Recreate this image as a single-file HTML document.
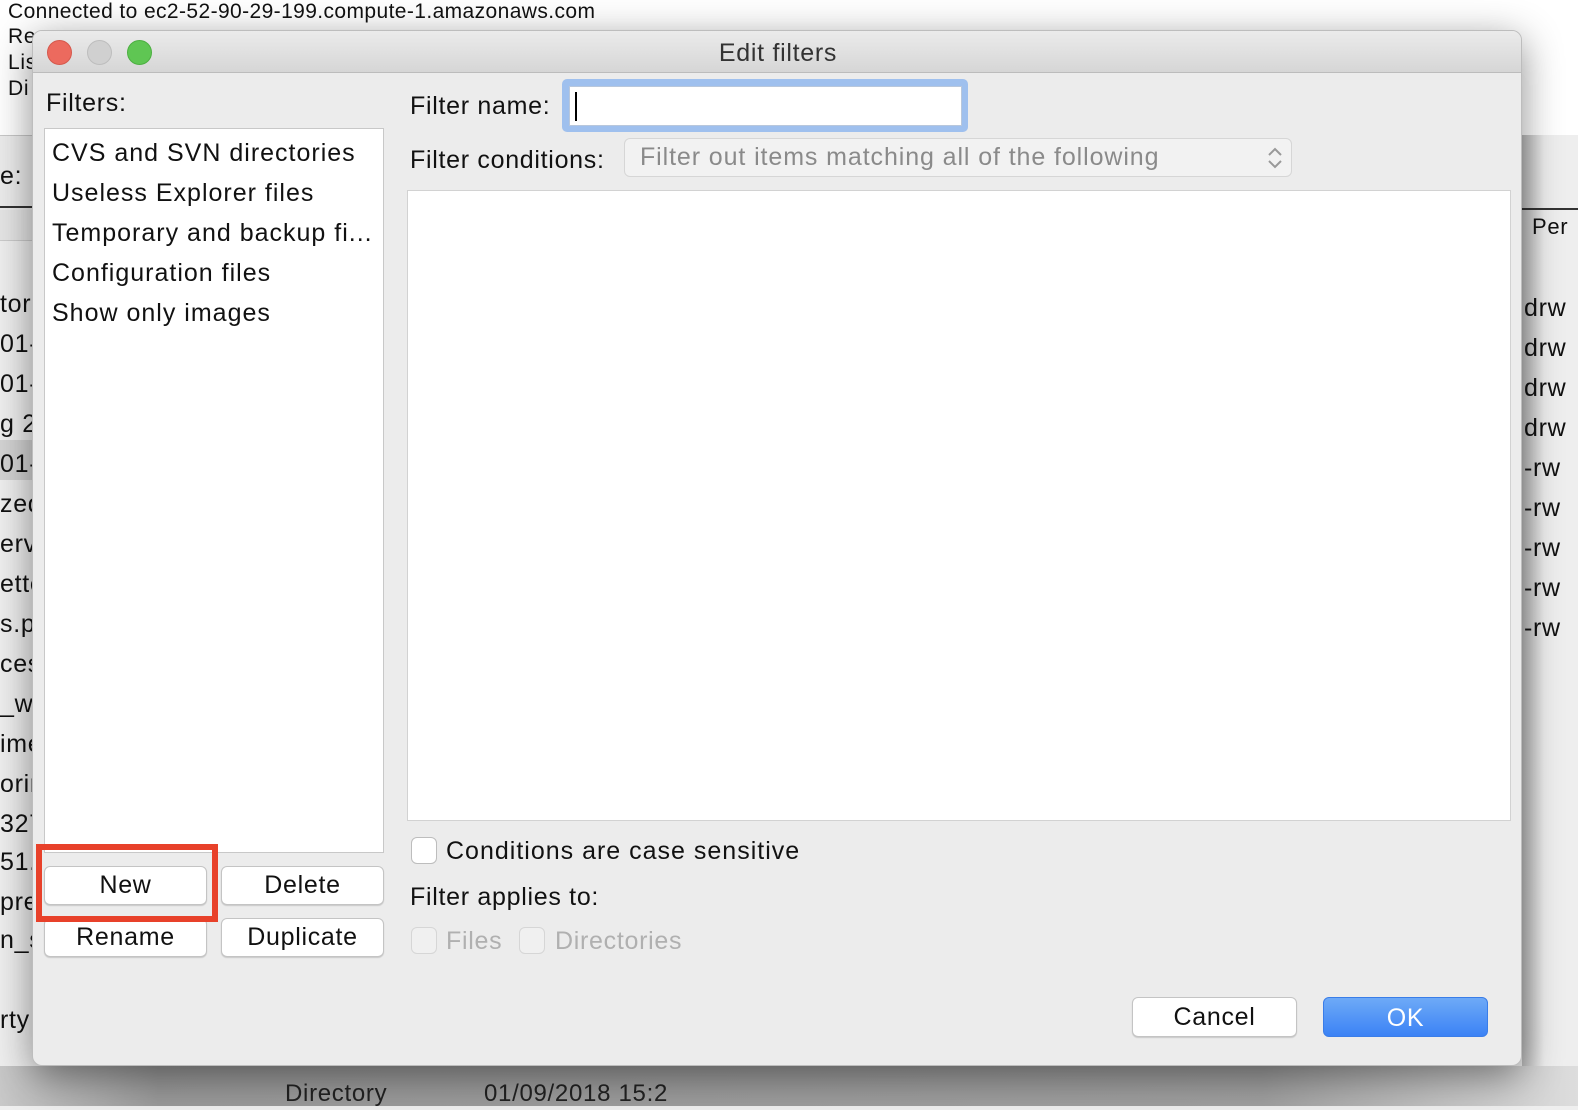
<!DOCTYPE html>
<html><head><meta charset="utf-8"><style>
*{margin:0;padding:0;box-sizing:border-box}
body{width:1578px;height:1102px;position:relative;overflow:hidden;background:#e6e6e6;font-family:"Liberation Sans",Arial,sans-serif;color:#111;letter-spacing:0.7px}
.a{position:absolute;white-space:nowrap}
.t{font-size:25px}
.btn{position:absolute;background:#fff;border:1px solid #c4c4c4;border-radius:6px;box-shadow:0 1px 1px rgba(0,0,0,.15);font-size:25px;text-align:center;color:#111}
.cb{position:absolute;width:26px;height:27px;border:1px solid #bdbdbd;border-radius:6px;background:#fff}
.bg{position:absolute;font-size:25px;color:#111;left:0}
</style></head><body>
<div class="a" style="left:0;top:0;width:1578px;height:135px;background:#fff"></div>
<div class="a" style="left:8px;top:0;font-size:21px;letter-spacing:0.4px">Connected to ec2-52-90-29-199.compute-1.amazonaws.com</div>
<div class="a" style="left:8px;top:25px;font-size:21px">Re</div>
<div class="a" style="left:8px;top:51px;font-size:21px">Lis</div>
<div class="a" style="left:8px;top:77px;font-size:21px">Di</div>
<div class="a" style="left:0;top:135px;width:1578px;height:75px;background:#ececec;border-top:1px solid #c8c8c8"></div>
<div class="a" style="left:0;top:162px;font-size:25px">e:</div>
<div class="a" style="left:0;top:206px;width:1578px;height:2px;background:#333"></div>
<div class="a" style="left:0;top:240px;width:1578px;height:870px;background:#efefef;border-top:1px solid #ccc"></div>
<div class="a" style="left:0;top:440px;width:40px;height:40px;background:#d4d4d4"></div>
<div class="bg a" style="top:290px">tor</div><div class="bg a" style="top:330px">01-</div><div class="bg a" style="top:370px">01-</div><div class="bg a" style="top:410px">g 20</div><div class="bg a" style="top:450px">01-</div><div class="bg a" style="top:490px">zed</div><div class="bg a" style="top:530px">erv</div><div class="bg a" style="top:570px">ette</div><div class="bg a" style="top:610px">s.p</div><div class="bg a" style="top:650px">ces</div><div class="bg a" style="top:690px">_wi</div><div class="bg a" style="top:730px">ime</div><div class="bg a" style="top:770px">orin</div><div class="bg a" style="top:810px">327</div><div class="bg a" style="top:848px">51.f</div><div class="bg a" style="top:888px">pre</div><div class="bg a" style="top:926px">n_s</div><div class="bg a" style="top:1006px">rty</div>
<div class="a" style="left:1522px;top:135px;width:56px;height:970px;background:linear-gradient(90deg,#bbb,#eee 40%)"></div>
<div class="a" style="left:1522px;top:208px;width:56px;height:2px;background:#333"></div>
<div class="a" style="left:1532px;top:214px;font-size:22px">Per</div>
<div class="a" style="left:1524px;top:288px;font-size:25px;line-height:40px">drw<br>drw<br>drw<br>drw<br>-rw<br>-rw<br>-rw<br>-rw<br>-rw</div>
<div class="a" style="left:0;top:1066px;width:1578px;height:40px;background:linear-gradient(90deg,#c8c8c8,#9a9a9a 10%,#a0a0a0 80%,#ddd)"></div>
<div class="a" style="left:285px;top:1080px;font-size:24px;color:#222">Directory</div>
<div class="a" style="left:484px;top:1080px;font-size:24px;color:#222">01/09/2018 15:2</div>
<div class="a" style="left:32px;top:30px;width:1490px;height:1036px;background:#ececec;border-radius:10px;box-shadow:0 10px 40px rgba(0,0,0,.45);overflow:hidden;border:1px solid #bdbdbd">
 <div class="a" style="left:0;top:0;width:1490px;height:42px;background:linear-gradient(#ebebeb,#d6d6d6);border-bottom:1px solid #bcbcbc"></div>
 <div class="a" style="left:14px;top:9px;width:25px;height:25px;border-radius:50%;background:#ec6a5e;border:1px solid #d5584c"></div>
 <div class="a" style="left:54px;top:9px;width:25px;height:25px;border-radius:50%;background:#d0d0d0;border:1px solid #bdbdbd"></div>
 <div class="a" style="left:94px;top:9px;width:25px;height:25px;border-radius:50%;background:#5fc653;border:1px solid #4caf41"></div>
 <div class="a" style="left:0;top:8px;width:1490px;text-align:center;font-size:25px;color:#333">Edit filters</div>
</div>
<div class="a t" style="left:46px;top:89px">Filters:</div>
<div class="a" style="left:44px;top:128px;width:340px;height:725px;background:#fff;border:1px solid #c8c8c8"></div>
<div class="a" style="left:52px;top:133px;font-size:25px;line-height:40px;color:#111;letter-spacing:1px">CVS and SVN directories<br>Useless Explorer files<br>Temporary and backup fi...<br>Configuration files<br>Show only images</div>
<div class="btn" style="left:44px;top:866px;width:163px;height:39px;line-height:37px">New</div>
<div class="btn" style="left:221px;top:866px;width:163px;height:39px;line-height:37px">Delete</div>
<div class="btn" style="left:44px;top:918px;width:163px;height:39px;line-height:37px">Rename</div>
<div class="btn" style="left:221px;top:918px;width:163px;height:39px;line-height:37px">Duplicate</div>
<div class="a" style="left:36px;top:844px;width:182px;height:78px;border:6px solid #e8412a"></div>
<div class="a t" style="left:410px;top:92px">Filter name:</div>
<div class="a" style="left:562px;top:79px;width:406px;height:53px;background:#9fc0ee;border-radius:5px"></div>
<div class="a" style="left:569px;top:86px;width:393px;height:40px;background:#fff;border:1px solid #b8c7dc"></div>
<div class="a" style="left:575px;top:92px;width:2px;height:29px;background:#000"></div>
<div class="a t" style="left:410px;top:146px">Filter conditions:</div>
<div class="a" style="left:624px;top:138px;width:668px;height:39px;background:#f2f2f2;border:1px solid #d6d6d6;border-radius:6px"></div>
<div class="a" style="left:640px;top:143px;font-size:25px;color:#8a8a8a;letter-spacing:0.9px">Filter out items matching all of the following</div>
<svg class="a" style="left:1266px;top:144px" width="18" height="28"><path d="M3 11 L9 5 L15 11 M3 17 L9 23 L15 17" fill="none" stroke="#999" stroke-width="2"/></svg>
<div class="a" style="left:407px;top:190px;width:1104px;height:631px;background:#fff;border:1px solid #d2d2d2"></div>
<div class="cb" style="left:411px;top:837px"></div>
<div class="a t" style="left:446px;top:837px;letter-spacing:1px">Conditions are case sensitive</div>
<div class="a t" style="left:410px;top:883px">Filter applies to:</div>
<div class="cb" style="left:411px;top:927px;background:#f0f0f0;border-color:#d6d6d6"></div>
<div class="a" style="left:446px;top:927px;font-size:25px;color:#b0b0b0">Files</div>
<div class="cb" style="left:519px;top:927px;background:#f0f0f0;border-color:#d6d6d6"></div>
<div class="a" style="left:555px;top:927px;font-size:25px;color:#b0b0b0">Directories</div>
<div class="btn" style="left:1132px;top:997px;width:165px;height:40px;line-height:38px">Cancel</div>
<div class="a" style="left:1323px;top:997px;width:165px;height:40px;line-height:40px;border-radius:6px;background:linear-gradient(#6eaaf7,#3b82f5);color:#fff;text-align:center;font-size:25px;border:1px solid #3a7de8">OK</div>
</body></html>
